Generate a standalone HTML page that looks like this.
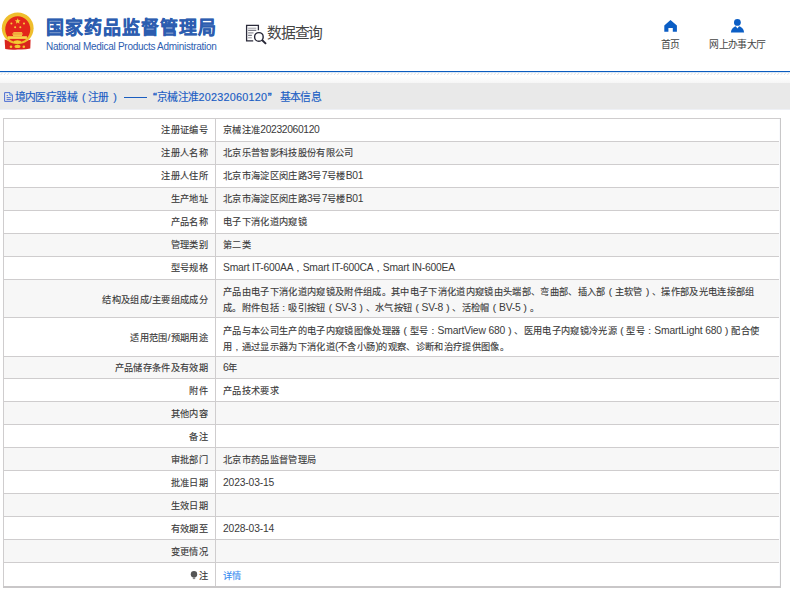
<!DOCTYPE html>
<html lang="zh-CN">
<head>
<meta charset="utf-8">
<style>
*{margin:0;padding:0;box-sizing:border-box;}
html,body{width:790px;height:596px;overflow:hidden;background:#fff;font-family:"Liberation Sans",sans-serif;color:#333;}
.abs{position:absolute;}
#hdr{position:absolute;left:0;top:0;width:790px;height:71px;background:#fff;}
#title{position:absolute;left:46px;top:15px;font-size:18px;line-height:26px;font-weight:bold;color:#2c5db0;white-space:nowrap;letter-spacing:1px;-webkit-text-stroke:0.35px #2c5db0;}
#eng{position:absolute;left:46px;top:41px;font-size:10px;line-height:12px;color:#2c5db0;white-space:nowrap;letter-spacing:-0.28px;}
#sjcx{position:absolute;left:266.8px;top:23.5px;font-size:14.8px;line-height:18px;color:#444;white-space:nowrap;letter-spacing:-1.1px;}
.nav{position:absolute;font-size:9.8px;line-height:12px;color:#444;white-space:nowrap;letter-spacing:-0.6px;}
#bline{position:absolute;left:0;top:71px;width:790px;height:1px;background:#0a5bbf;box-shadow:0 1px 0 rgba(10,91,191,0.15);}

#grad{position:absolute;left:0;top:76px;width:790px;height:7px;background:linear-gradient(#fff,#f6f6f6);}
#crumb{position:absolute;left:0;top:83px;width:790px;height:26px;background:#e9e9e9;}
.ct{position:absolute;top:7.5px;font-size:10.8px;line-height:13px;color:#1a5dc4;white-space:nowrap;-webkit-text-stroke:0.15px #1a5dc4;}
table{position:absolute;left:3px;top:118px;width:778px;border-collapse:collapse;table-layout:fixed;font-size:9.2px;color:#3a3a3a;letter-spacing:0.33px;-webkit-text-stroke:0.12px #3a3a3a;}
td{border:1px solid #cfcdce;height:23px;padding:0 0 0 7px;vertical-align:middle;line-height:16px;white-space:nowrap;overflow:visible;}
td.l{text-align:right;padding:0 7px 0 0;}
tr:nth-child(even) td{background:#f7f7f7;}
tr.h22 td{height:22px;}
tr.lo td{padding-top:2px;}
tr.h24 td{height:24px;padding-top:3px;}
tr.h38 td{height:38px;padding-top:3px;line-height:16px;}
tr.h39 td{height:39px;padding-top:3px;line-height:15px;}
tr:last-child td{border-bottom:2px solid #c9c7c8;}
a{color:#3a8cf0;text-decoration:none;-webkit-text-stroke:0.1px #3a8cf0;}
.lat{letter-spacing:-0.35px;font-size:10.3px;-webkit-text-stroke:0;}
.la2{letter-spacing:-0.15px;}
.la3{letter-spacing:-0.21px;}
.la4{letter-spacing:-0.16px;}
.pl{font-size:9.9px;letter-spacing:0;margin:0 2.9px 0 3.1px;}
.pc{font-size:9.9px;letter-spacing:0;margin:0 3.3px 0 3.28px;}
</style>
</head>
<body>
<div id="hdr">
  <!-- emblem -->
  <svg class="abs" style="left:0;top:0" width="40" height="55" viewBox="0 0 40 55">
    <path d="M4.6 39.5 Q17.7 45 30.6 39.5 L30.3 48.6 Q24 50 17.7 49.4 Q11 50 5.2 49 Z" fill="#d9251d"/>
    <circle cx="17.7" cy="28.3" r="15.9" fill="#efbe2c"/>
    <ellipse cx="17.75" cy="29.3" rx="12.5" ry="13" fill="#e3261b"/>
    <path d="M17.7 18.3 l0.85 1.9 2 0.15 -1.55 1.3 0.5 2 -1.8 -1.1 -1.8 1.1 0.5 -2 -1.55 -1.3 2 -0.15Z" fill="#f6cf3a"/>
    <circle cx="11.4" cy="23.5" r="1" fill="#f6cf3a"/>
    <circle cx="24" cy="23.5" r="1" fill="#f6cf3a"/>
    <circle cx="15.1" cy="27.3" r="1" fill="#f6cf3a"/>
    <circle cx="20.3" cy="27.3" r="1" fill="#f6cf3a"/>
    <rect x="13.3" y="32.2" width="8.8" height="1.4" fill="#f7d64c"/>
    <rect x="12.1" y="33.5" width="10.8" height="1" fill="#f3c83c"/>
    <rect x="13" y="34.4" width="9" height="1.5" fill="#f7d64c"/>
    <rect x="8" y="36.2" width="18.9" height="2.7" fill="#f7d64c"/>
    <ellipse cx="17.4" cy="41.8" rx="3.6" ry="1.5" fill="#f5cc34"/>
    <ellipse cx="17.5" cy="46.4" rx="3" ry="1.7" fill="#f3c82e"/>
    <ellipse cx="11" cy="46.8" rx="1.3" ry="1.3" fill="#f3c82e"/>
    <ellipse cx="23.8" cy="46.8" rx="1.3" ry="1.3" fill="#f3c82e"/>
  </svg>
  <div id="title">国家药品监督管理局</div>
  <div id="eng">National Medical Products Administration</div>
  <svg class="abs" style="left:244px;top:22px" width="24" height="24" viewBox="0 0 24 24">
    <path d="M9.2 18.9 H2.6 V3.3 H14.4 V8.3" fill="none" stroke="#2b2b3b" stroke-width="1.3"/>
    <line x1="4.1" y1="6.2" x2="12.3" y2="6.2" stroke="#9a9aa2" stroke-width="1"/>
    <line x1="4.1" y1="8.3" x2="12.3" y2="8.3" stroke="#4a4a58" stroke-width="0.9"/>
    <line x1="4.1" y1="10.9" x2="9.5" y2="10.9" stroke="#7a7a86" stroke-width="1"/>
    <line x1="4.1" y1="13.3" x2="7.9" y2="13.3" stroke="#4a4a58" stroke-width="0.9"/>
    <line x1="4.1" y1="15.8" x2="7.9" y2="15.8" stroke="#9a9aa2" stroke-width="1"/>
    <circle cx="14.9" cy="14.9" r="4.3" fill="#fff" stroke="#262636" stroke-width="1.4"/>
    <line x1="18" y1="18" x2="22" y2="21.9" stroke="#262636" stroke-width="1.9"/>
  </svg>
  <div id="sjcx">数据查询</div>
  <svg class="abs" style="left:660px;top:16px" width="20" height="20" viewBox="0 0 20 20"><path d="M10.5 3.9 L16.9 9.4 V15.8 H12.8 V12.1 H8.4 V15.8 H4.3 V9.4Z" fill="#0b5ec5"/></svg>
  <div class="nav" style="left:661px;top:38.7px">首页</div>
  <svg class="abs" style="left:728px;top:16px" width="20" height="20" viewBox="0 0 20 20"><circle cx="9.4" cy="6.4" r="3.4" fill="#0b5ec5"/><path d="M2.9 16.5 A6.6 6.4 0 0 1 16.1 16.5 Z" fill="#0b5ec5"/><path d="M7.6 10.1 L11.2 10.1 L9.4 12.4 Z" fill="#fff"/></svg>
  <div class="nav" style="left:709.3px;top:38.7px">网上办事大厅</div>
</div>
<div id="bline"></div>
<svg id="hatch" width="790" height="80" style="position:absolute;left:0;top:0" viewBox="0 0 790 80"><path d="M0.60 75L2.40 73M3.93 75L5.73 73M7.27 75L9.07 73M10.60 75L12.40 73M13.93 75L15.73 73M17.27 75L19.07 73M20.60 75L22.40 73M23.93 75L25.73 73M27.27 75L29.07 73M30.60 75L32.40 73M33.93 75L35.73 73M37.27 75L39.07 73M40.60 75L42.40 73M43.93 75L45.73 73M47.27 75L49.07 73M50.60 75L52.40 73M53.93 75L55.73 73M57.27 75L59.07 73M60.60 75L62.40 73M63.93 75L65.73 73M67.27 75L69.07 73M70.60 75L72.40 73M73.93 75L75.73 73M77.27 75L79.07 73M80.60 75L82.40 73M83.93 75L85.73 73M87.27 75L89.07 73M90.60 75L92.40 73M93.93 75L95.73 73M97.27 75L99.07 73M100.60 75L102.40 73M103.93 75L105.73 73M107.27 75L109.07 73M110.60 75L112.40 73M113.93 75L115.73 73M117.27 75L119.07 73M120.60 75L122.40 73M123.93 75L125.73 73M127.27 75L129.07 73M130.60 75L132.40 73M133.93 75L135.73 73M137.27 75L139.07 73M140.60 75L142.40 73M143.93 75L145.73 73M147.27 75L149.07 73M150.60 75L152.40 73M153.93 75L155.73 73M157.27 75L159.07 73M160.60 75L162.40 73M163.93 75L165.73 73M167.27 75L169.07 73M170.60 75L172.40 73M173.93 75L175.73 73M177.27 75L179.07 73M180.60 75L182.40 73M183.93 75L185.73 73M187.27 75L189.07 73M190.60 75L192.40 73M193.93 75L195.73 73M197.27 75L199.07 73M200.60 75L202.40 73M203.93 75L205.73 73M207.27 75L209.07 73M210.60 75L212.40 73M213.93 75L215.73 73M217.27 75L219.07 73M220.60 75L222.40 73M223.93 75L225.73 73M227.27 75L229.07 73M230.60 75L232.40 73M233.93 75L235.73 73M237.27 75L239.07 73M240.60 75L242.40 73M243.93 75L245.73 73M247.27 75L249.07 73M250.60 75L252.40 73M253.93 75L255.73 73M257.27 75L259.07 73M260.60 75L262.40 73M263.93 75L265.73 73M267.27 75L269.07 73M270.60 75L272.40 73M273.93 75L275.73 73M277.27 75L279.07 73M280.60 75L282.40 73M283.93 75L285.73 73M287.27 75L289.07 73M290.60 75L292.40 73M293.93 75L295.73 73M297.27 75L299.07 73M300.60 75L302.40 73M303.93 75L305.73 73M307.27 75L309.07 73M310.60 75L312.40 73M313.93 75L315.73 73M317.27 75L319.07 73M320.60 75L322.40 73M323.93 75L325.73 73M327.27 75L329.07 73M330.60 75L332.40 73M333.93 75L335.73 73M337.27 75L339.07 73M340.60 75L342.40 73M343.93 75L345.73 73M347.27 75L349.07 73M350.60 75L352.40 73M353.93 75L355.73 73M357.27 75L359.07 73M360.60 75L362.40 73M363.93 75L365.73 73M367.27 75L369.07 73M370.60 75L372.40 73M373.93 75L375.73 73M377.27 75L379.07 73M380.60 75L382.40 73M383.93 75L385.73 73M387.27 75L389.07 73M390.60 75L392.40 73M393.93 75L395.73 73M397.27 75L399.07 73M400.60 75L402.40 73M403.93 75L405.73 73M407.27 75L409.07 73M410.60 75L412.40 73M413.93 75L415.73 73M417.27 75L419.07 73M420.60 75L422.40 73M423.93 75L425.73 73M427.27 75L429.07 73M430.60 75L432.40 73M433.93 75L435.73 73M437.27 75L439.07 73M440.60 75L442.40 73M443.93 75L445.73 73M447.27 75L449.07 73M450.60 75L452.40 73M453.93 75L455.73 73M457.27 75L459.07 73M460.60 75L462.40 73M463.93 75L465.73 73M467.27 75L469.07 73M470.60 75L472.40 73M473.93 75L475.73 73M477.27 75L479.07 73M480.60 75L482.40 73M483.93 75L485.73 73M487.27 75L489.07 73M490.60 75L492.40 73M493.93 75L495.73 73M497.27 75L499.07 73M500.60 75L502.40 73M503.93 75L505.73 73M507.27 75L509.07 73M510.60 75L512.40 73M513.93 75L515.73 73M517.27 75L519.07 73M520.60 75L522.40 73M523.93 75L525.73 73M527.27 75L529.07 73M530.60 75L532.40 73M533.93 75L535.73 73M537.27 75L539.07 73M540.60 75L542.40 73M543.93 75L545.73 73M547.27 75L549.07 73M550.60 75L552.40 73M553.93 75L555.73 73M557.27 75L559.07 73M560.60 75L562.40 73M563.93 75L565.73 73M567.27 75L569.07 73M570.60 75L572.40 73M573.93 75L575.73 73M577.27 75L579.07 73M580.60 75L582.40 73M583.93 75L585.73 73M587.27 75L589.07 73M590.60 75L592.40 73M593.93 75L595.73 73M597.27 75L599.07 73M600.60 75L602.40 73M603.93 75L605.73 73M607.27 75L609.07 73M610.60 75L612.40 73M613.93 75L615.73 73M617.27 75L619.07 73M620.60 75L622.40 73M623.93 75L625.73 73M627.27 75L629.07 73M630.60 75L632.40 73M633.93 75L635.73 73M637.27 75L639.07 73M640.60 75L642.40 73M643.93 75L645.73 73M647.27 75L649.07 73M650.60 75L652.40 73M653.93 75L655.73 73M657.27 75L659.07 73M660.60 75L662.40 73M663.93 75L665.73 73M667.27 75L669.07 73M670.60 75L672.40 73M673.93 75L675.73 73M677.27 75L679.07 73M680.60 75L682.40 73M683.93 75L685.73 73M687.27 75L689.07 73M690.60 75L692.40 73M693.93 75L695.73 73M697.27 75L699.07 73M700.60 75L702.40 73M703.93 75L705.73 73M707.27 75L709.07 73M710.60 75L712.40 73M713.93 75L715.73 73M717.27 75L719.07 73M720.60 75L722.40 73M723.93 75L725.73 73M727.27 75L729.07 73M730.60 75L732.40 73M733.93 75L735.73 73M737.27 75L739.07 73M740.60 75L742.40 73M743.93 75L745.73 73M747.27 75L749.07 73M750.60 75L752.40 73M753.93 75L755.73 73M757.27 75L759.07 73M760.60 75L762.40 73M763.93 75L765.73 73M767.27 75L769.07 73M770.60 75L772.40 73M773.93 75L775.73 73M777.27 75L779.07 73M780.60 75L782.40 73M783.93 75L785.73 73M787.27 75L789.07 73M790.60 75L792.40 73M793.93 75L795.73 73M797.27 75L799.07 73" stroke="#dcdcdc" stroke-width="0.8" fill="none"/></svg>
<div id="grad"></div>
<div id="crumb">
  <svg class="abs" style="left:4px;top:9px" width="10" height="10" viewBox="0 0 10 10"><path d="M0.6 0.6 H6 L8.4 3 V9.4 H0.6Z" fill="none" stroke="#4668d2" stroke-width="0.95"/><path d="M5.8 0.8 V3.2 H8.3" fill="none" stroke="#3b8be0" stroke-width="0.9"/><line x1="2.6" y1="3.6" x2="4" y2="3.6" stroke="#3b63d0" stroke-width="0.9"/><line x1="2.6" y1="5.6" x2="6.8" y2="5.6" stroke="#3b63d0" stroke-width="0.9"/><line x1="2.6" y1="7.6" x2="6.8" y2="7.6" stroke="#3b63d0" stroke-width="0.9"/></svg>
  <div class="ct" style="left:14.5px;letter-spacing:-0.6px">境内医疗器械</div>
  <div class="ct" style="left:82px;font-size:10.6px">(</div>
  <div class="ct" style="left:88px;letter-spacing:-0.6px">注册</div>
  <div class="ct" style="left:113.3px;font-size:10.6px">)</div>
  <div class="abs" style="left:123.5px;top:14px;width:23.5px;height:1.3px;background:#1a5dbf"></div>
  <div class="ct" style="left:153px;font-size:11.5px;-webkit-text-stroke:0.4px #1a5dc4">“</div>
  <div class="ct" style="left:157px;letter-spacing:-0.6px">京械注准</div>
  <div class="ct" style="left:198.5px;font-size:10.8px;letter-spacing:0.25px">20232060120</div>
  <div class="ct" style="left:267.8px;font-size:11.5px;-webkit-text-stroke:0.4px #1a5dc4">”</div>
  <div class="ct" style="left:279.5px;letter-spacing:-0.6px">基本信息</div>
</div>
<table>
<colgroup><col style="width:212px"><col></colgroup>
<tr><td class="l">注册证编号</td><td>京械注准<span class="lat">20232060120</span></td></tr>
<tr><td class="l">注册人名称</td><td>北京乐普智影科技股份有限公司</td></tr>
<tr><td class="l">注册人住所</td><td>北京市海淀区闵庄路<span class="lat">3</span>号<span class="lat">7</span>号楼<span class="lat">B01</span></td></tr>
<tr><td class="l">生产地址</td><td>北京市海淀区闵庄路<span class="lat">3</span>号<span class="lat">7</span>号楼<span class="lat">B01</span></td></tr>
<tr><td class="l">产品名称</td><td>电子下消化道内窥镜</td></tr>
<tr><td class="l">管理类别</td><td>第二类</td></tr>
<tr><td class="l">型号规格</td><td><span class="lat la3">Smart IT-600AA</span><span class="pc">,</span><span class="lat la3">Smart IT-600CA</span><span class="pc">,</span><span class="lat la3">Smart IN-600EA</span></td></tr>
<tr class="h38"><td class="l">结构及组成/主要组成成分</td><td>产品由电子下消化道内窥镜及附件组成。其中电子下消化道内窥镜由头端部、弯曲部、插入部<span class="pl">(</span>主软管<span class="pl">)</span>、操作部及光电连接部组<br>成。附件包括<span class="pc">:</span>吸引按钮<span class="pl">(</span><span class="lat la3">SV-3</span><span class="pl">)</span>、水气按钮<span class="pl">(</span><span class="lat la3">SV-8</span><span class="pl">)</span>、活检帽<span class="pl">(</span><span class="lat la3">BV-5</span><span class="pl">)</span>。</td></tr>
<tr class="h39"><td class="l">适用范围/预期用途</td><td>产品与本公司生产的电子内窥镜图像处理器<span class="pl">(</span>型号<span class="pc">:</span><span class="lat la4">SmartView 680</span><span class="pl">)</span>、医用电子内窥镜冷光源<span class="pl">(</span>型号<span class="pc">:</span><span class="lat la4">SmartLight 680</span><span class="pl">)</span>配合使<br>用<span class="pc">,</span>通过显示器为下消化道<span class="lat">(</span>不含小肠<span class="lat">)</span>的观察、诊断和治疗提供图像。</td></tr>
<tr class="h22"><td class="l">产品储存条件及有效期</td><td><span class="lat">6</span>年</td></tr>
<tr class="lo"><td class="l">附件</td><td>产品技术要求</td></tr>
<tr class="lo"><td class="l">其他内容</td><td></td></tr>
<tr class="lo"><td class="l">备注</td><td></td></tr>
<tr class="lo"><td class="l">审批部门</td><td>北京市药品监督管理局</td></tr>
<tr class="lo"><td class="l">批准日期</td><td><span class="lat la2">2023-03-15</span></td></tr>
<tr class="lo"><td class="l">生效日期</td><td></td></tr>
<tr class="lo"><td class="l">有效期至</td><td><span class="lat la2">2028-03-14</span></td></tr>
<tr class="lo"><td class="l">变更情况</td><td></td></tr>
<tr class="h24 lo"><td class="l"><svg width="8" height="9" viewBox="0 0 8 9" style="vertical-align:-1px;margin-right:1px"><circle cx="4" cy="3.3" r="3.2" fill="#555"/><rect x="2.8" y="6.1" width="2.4" height="2" fill="#8a8a8a"/></svg>注</td><td><a>详情</a></td></tr>
</table>
<div class="abs" style="left:779px;top:119px;width:1px;height:467px;background:#f9fafd"></div>
<div class="abs" style="left:780px;top:118px;width:1px;height:470px;background:#c8c7c8"></div>
<div class="abs" style="left:0;top:109px;width:790px;height:1px;background:#eef0f5"></div>
</body>
</html>
